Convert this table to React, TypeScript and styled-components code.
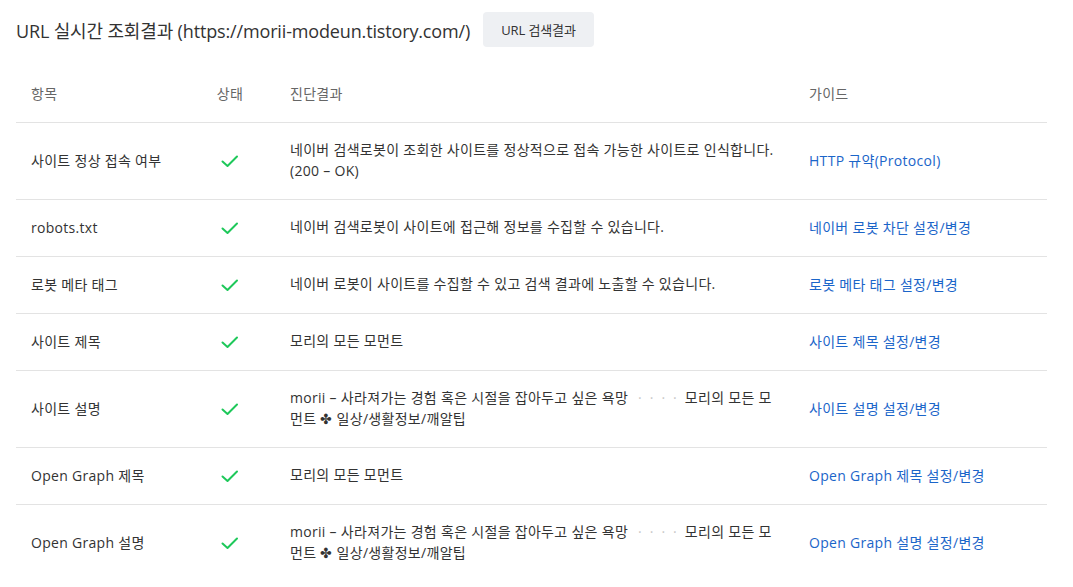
import React from "react";
import styled, { createGlobalStyle } from "styled-components";

const Global = createGlobalStyle`
  html, body { margin: 0; padding: 0; background: #fff; }
  body {
    font-family: "Open Sans", "Noto Sans CJK KR", sans-serif;
    color: #333;
    -webkit-font-smoothing: antialiased;
  }
`;

const Page = styled.div`
  padding: 12px 26px 0 16px;
`;

const TitleBar = styled.div`
  display: flex;
  align-items: center;
  gap: 13px;
  height: 35px;
`;

const Title = styled.h2`
  margin: 0;
  font-size: 18px;
  font-weight: 400;
  color: #333;
  letter-spacing: -0.15px;
`;

const GrayButton = styled.button`
  height: 35px;
  padding: 0 18px;
  border: none;
  border-radius: 4px;
  background: #eef0f3;
  color: #333;
  font-family: inherit;
  font-size: 13px;
  letter-spacing: -0.1px;
  cursor: pointer;
`;

const Table = styled.div`
  margin-top: 15px;
  display: grid;
  grid-template-columns: 169px 90px 519px 1fr;
  font-size: 14px;
  letter-spacing: 0.3px;
`;

const HeadCell = styled.div<{ $center?: boolean }>`
  padding: 22px 15px 18px;
  line-height: 20px;
  color: #666;
  border-bottom: 1px solid #e3e3e3;
  text-align: ${(p) => (p.$center ? "center" : "left")};
`;

const Cell = styled.div<{ $center?: boolean; $last?: boolean }>`
  padding: 18px 15px;
  line-height: 20px;
  color: #333;
  border-bottom: 1px solid ${(p) => (p.$last ? "transparent" : "#e3e3e3")};
  display: flex;
  align-items: center;
  justify-content: ${(p) => (p.$center ? "center" : "flex-start")};
`;

const DescCell = styled(Cell)`
  display: block;
  padding-top: 16px;
  padding-bottom: 18px;
  line-height: 21px;
`;

const GuideLink = styled.a`
  color: #1b65c9;
  text-decoration: none;
`;

const Dots = styled.span`
  color: #c8c8c8;
  letter-spacing: 8px;
  margin-left: 10px;
`;

const Check = () => (
  <svg width="20" height="16" viewBox="0 0 20 16" aria-hidden>
    <polyline
      points="2.5,8.5 7.5,13 17,3.5"
      fill="none"
      stroke="#1ec85a"
      strokeWidth="2"
      strokeLinecap="round"
      strokeLinejoin="round"
    />
  </svg>
);

const longDesc = (
  <>
    morii – 사라져가는 경험 혹은 시절을 잡아두고 싶은 욕망<Dots>····</Dots>
    모리의 모든 모먼트 ✤ 일상/생활정보/깨알팁
  </>
);

const rows: { item: string; desc: React.ReactNode; guide: string }[] = [
  {
    item: "사이트 정상 접속 여부",
    desc: (
      <>
        네이버 검색로봇이 조회한 사이트를 정상적으로 접속 가능한 사이트로 인식합니다.
        <br />
        (200 – OK)
      </>
    ),
    guide: "HTTP 규약(Protocol)",
  },
  {
    item: "robots.txt",
    desc: "네이버 검색로봇이 사이트에 접근해 정보를 수집할 수 있습니다.",
    guide: "네이버 로봇 차단 설정/변경",
  },
  {
    item: "로봇 메타 태그",
    desc: "네이버 로봇이 사이트를 수집할 수 있고 검색 결과에 노출할 수 있습니다.",
    guide: "로봇 메타 태그 설정/변경",
  },
  { item: "사이트 제목", desc: "모리의 모든 모먼트", guide: "사이트 제목 설정/변경" },
  { item: "사이트 설명", desc: longDesc, guide: "사이트 설명 설정/변경" },
  { item: "Open Graph 제목", desc: "모리의 모든 모먼트", guide: "Open Graph 제목 설정/변경" },
  { item: "Open Graph 설명", desc: longDesc, guide: "Open Graph 설명 설정/변경" },
];

export default function App() {
  return (
    <>
      <Global />
      <Page>
        <TitleBar>
          <Title>URL 실시간 조회결과 (https://morii-modeun.tistory.com/)</Title>
          <GrayButton>URL 검색결과</GrayButton>
        </TitleBar>
        <Table>
          <HeadCell>항목</HeadCell>
          <HeadCell $center>상태</HeadCell>
          <HeadCell>진단결과</HeadCell>
          <HeadCell>가이드</HeadCell>
          {rows.map((r, i) => {
            const last = i === rows.length - 1;
            return (
              <React.Fragment key={i}>
                <Cell $last={last}>{r.item}</Cell>
                <Cell $center $last={last}>
                  <Check />
                </Cell>
                <DescCell $last={last}>{r.desc}</DescCell>
                <Cell $last={last}>
                  <GuideLink href="#">{r.guide}</GuideLink>
                </Cell>
              </React.Fragment>
            );
          })}
        </Table>
      </Page>
    </>
  );
}
